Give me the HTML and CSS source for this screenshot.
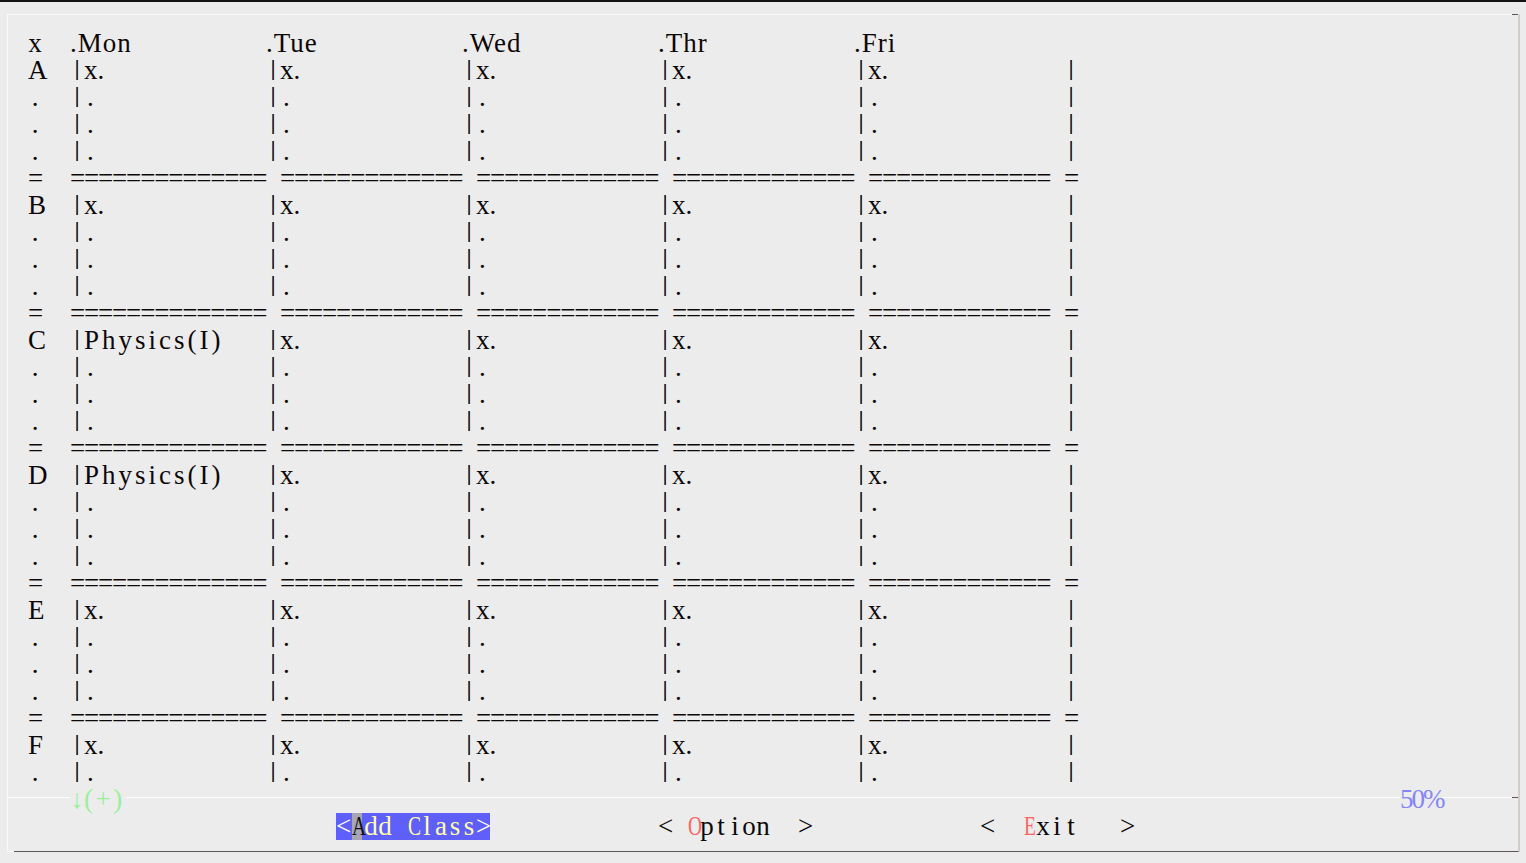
FILE: index.html
```html
<!DOCTYPE html>
<html>
<head>
<meta charset="utf-8">
<title>Timetable</title>
<link rel="stylesheet" href="styles.css">
</head>
<body>
<div class="topline"></div>
<div class="frame">
  <div class="table">
    <div class="row hd"><span class="lbl">x</span><span class="c">.Mon</span><span class="c">.Tue</span><span class="c">.Wed</span><span class="c">.Thr</span><span class="c">.Fri</span></div>

    <div class="row"><span class="lbl">A</span><span class="c"><span class="v">|</span>x.</span><span class="c"><span class="v">|</span>x.</span><span class="c"><span class="v">|</span>x.</span><span class="c"><span class="v">|</span>x.</span><span class="c"><span class="v">|</span>x.</span><span class="end"><span class="v">|</span></span></div>
    <div class="row"><span class="lbl">.</span><span class="c"><span class="v">|</span><span class="d">.</span></span><span class="c"><span class="v">|</span><span class="d">.</span></span><span class="c"><span class="v">|</span><span class="d">.</span></span><span class="c"><span class="v">|</span><span class="d">.</span></span><span class="c"><span class="v">|</span><span class="d">.</span></span><span class="end"><span class="v">|</span></span></div>
    <div class="row"><span class="lbl">.</span><span class="c"><span class="v">|</span><span class="d">.</span></span><span class="c"><span class="v">|</span><span class="d">.</span></span><span class="c"><span class="v">|</span><span class="d">.</span></span><span class="c"><span class="v">|</span><span class="d">.</span></span><span class="c"><span class="v">|</span><span class="d">.</span></span><span class="end"><span class="v">|</span></span></div>
    <div class="row"><span class="lbl">.</span><span class="c"><span class="v">|</span><span class="d">.</span></span><span class="c"><span class="v">|</span><span class="d">.</span></span><span class="c"><span class="v">|</span><span class="d">.</span></span><span class="c"><span class="v">|</span><span class="d">.</span></span><span class="c"><span class="v">|</span><span class="d">.</span></span><span class="end"><span class="v">|</span></span></div>
    <div class="row sp"><span class="lbl">=</span><span class="c">==============</span><span class="c q">=============</span><span class="c q">=============</span><span class="c q">=============</span><span class="c q">=============</span><span class="end">=</span></div>

    <div class="row"><span class="lbl">B</span><span class="c"><span class="v">|</span>x.</span><span class="c"><span class="v">|</span>x.</span><span class="c"><span class="v">|</span>x.</span><span class="c"><span class="v">|</span>x.</span><span class="c"><span class="v">|</span>x.</span><span class="end"><span class="v">|</span></span></div>
    <div class="row"><span class="lbl">.</span><span class="c"><span class="v">|</span><span class="d">.</span></span><span class="c"><span class="v">|</span><span class="d">.</span></span><span class="c"><span class="v">|</span><span class="d">.</span></span><span class="c"><span class="v">|</span><span class="d">.</span></span><span class="c"><span class="v">|</span><span class="d">.</span></span><span class="end"><span class="v">|</span></span></div>
    <div class="row"><span class="lbl">.</span><span class="c"><span class="v">|</span><span class="d">.</span></span><span class="c"><span class="v">|</span><span class="d">.</span></span><span class="c"><span class="v">|</span><span class="d">.</span></span><span class="c"><span class="v">|</span><span class="d">.</span></span><span class="c"><span class="v">|</span><span class="d">.</span></span><span class="end"><span class="v">|</span></span></div>
    <div class="row"><span class="lbl">.</span><span class="c"><span class="v">|</span><span class="d">.</span></span><span class="c"><span class="v">|</span><span class="d">.</span></span><span class="c"><span class="v">|</span><span class="d">.</span></span><span class="c"><span class="v">|</span><span class="d">.</span></span><span class="c"><span class="v">|</span><span class="d">.</span></span><span class="end"><span class="v">|</span></span></div>
    <div class="row sp"><span class="lbl">=</span><span class="c">==============</span><span class="c q">=============</span><span class="c q">=============</span><span class="c q">=============</span><span class="c q">=============</span><span class="end">=</span></div>

    <div class="row"><span class="lbl">C</span><span class="c"><span class="v">|</span><span class="ph">Physics(I)</span></span><span class="c"><span class="v">|</span>x.</span><span class="c"><span class="v">|</span>x.</span><span class="c"><span class="v">|</span>x.</span><span class="c"><span class="v">|</span>x.</span><span class="end"><span class="v">|</span></span></div>
    <div class="row"><span class="lbl">.</span><span class="c"><span class="v">|</span><span class="d">.</span></span><span class="c"><span class="v">|</span><span class="d">.</span></span><span class="c"><span class="v">|</span><span class="d">.</span></span><span class="c"><span class="v">|</span><span class="d">.</span></span><span class="c"><span class="v">|</span><span class="d">.</span></span><span class="end"><span class="v">|</span></span></div>
    <div class="row"><span class="lbl">.</span><span class="c"><span class="v">|</span><span class="d">.</span></span><span class="c"><span class="v">|</span><span class="d">.</span></span><span class="c"><span class="v">|</span><span class="d">.</span></span><span class="c"><span class="v">|</span><span class="d">.</span></span><span class="c"><span class="v">|</span><span class="d">.</span></span><span class="end"><span class="v">|</span></span></div>
    <div class="row"><span class="lbl">.</span><span class="c"><span class="v">|</span><span class="d">.</span></span><span class="c"><span class="v">|</span><span class="d">.</span></span><span class="c"><span class="v">|</span><span class="d">.</span></span><span class="c"><span class="v">|</span><span class="d">.</span></span><span class="c"><span class="v">|</span><span class="d">.</span></span><span class="end"><span class="v">|</span></span></div>
    <div class="row sp"><span class="lbl">=</span><span class="c">==============</span><span class="c q">=============</span><span class="c q">=============</span><span class="c q">=============</span><span class="c q">=============</span><span class="end">=</span></div>

    <div class="row"><span class="lbl">D</span><span class="c"><span class="v">|</span><span class="ph">Physics(I)</span></span><span class="c"><span class="v">|</span>x.</span><span class="c"><span class="v">|</span>x.</span><span class="c"><span class="v">|</span>x.</span><span class="c"><span class="v">|</span>x.</span><span class="end"><span class="v">|</span></span></div>
    <div class="row"><span class="lbl">.</span><span class="c"><span class="v">|</span><span class="d">.</span></span><span class="c"><span class="v">|</span><span class="d">.</span></span><span class="c"><span class="v">|</span><span class="d">.</span></span><span class="c"><span class="v">|</span><span class="d">.</span></span><span class="c"><span class="v">|</span><span class="d">.</span></span><span class="end"><span class="v">|</span></span></div>
    <div class="row"><span class="lbl">.</span><span class="c"><span class="v">|</span><span class="d">.</span></span><span class="c"><span class="v">|</span><span class="d">.</span></span><span class="c"><span class="v">|</span><span class="d">.</span></span><span class="c"><span class="v">|</span><span class="d">.</span></span><span class="c"><span class="v">|</span><span class="d">.</span></span><span class="end"><span class="v">|</span></span></div>
    <div class="row"><span class="lbl">.</span><span class="c"><span class="v">|</span><span class="d">.</span></span><span class="c"><span class="v">|</span><span class="d">.</span></span><span class="c"><span class="v">|</span><span class="d">.</span></span><span class="c"><span class="v">|</span><span class="d">.</span></span><span class="c"><span class="v">|</span><span class="d">.</span></span><span class="end"><span class="v">|</span></span></div>
    <div class="row sp"><span class="lbl">=</span><span class="c">==============</span><span class="c q">=============</span><span class="c q">=============</span><span class="c q">=============</span><span class="c q">=============</span><span class="end">=</span></div>

    <div class="row"><span class="lbl">E</span><span class="c"><span class="v">|</span>x.</span><span class="c"><span class="v">|</span>x.</span><span class="c"><span class="v">|</span>x.</span><span class="c"><span class="v">|</span>x.</span><span class="c"><span class="v">|</span>x.</span><span class="end"><span class="v">|</span></span></div>
    <div class="row"><span class="lbl">.</span><span class="c"><span class="v">|</span><span class="d">.</span></span><span class="c"><span class="v">|</span><span class="d">.</span></span><span class="c"><span class="v">|</span><span class="d">.</span></span><span class="c"><span class="v">|</span><span class="d">.</span></span><span class="c"><span class="v">|</span><span class="d">.</span></span><span class="end"><span class="v">|</span></span></div>
    <div class="row"><span class="lbl">.</span><span class="c"><span class="v">|</span><span class="d">.</span></span><span class="c"><span class="v">|</span><span class="d">.</span></span><span class="c"><span class="v">|</span><span class="d">.</span></span><span class="c"><span class="v">|</span><span class="d">.</span></span><span class="c"><span class="v">|</span><span class="d">.</span></span><span class="end"><span class="v">|</span></span></div>
    <div class="row"><span class="lbl">.</span><span class="c"><span class="v">|</span><span class="d">.</span></span><span class="c"><span class="v">|</span><span class="d">.</span></span><span class="c"><span class="v">|</span><span class="d">.</span></span><span class="c"><span class="v">|</span><span class="d">.</span></span><span class="c"><span class="v">|</span><span class="d">.</span></span><span class="end"><span class="v">|</span></span></div>
    <div class="row sp"><span class="lbl">=</span><span class="c">==============</span><span class="c q">=============</span><span class="c q">=============</span><span class="c q">=============</span><span class="c q">=============</span><span class="end">=</span></div>

    <div class="row"><span class="lbl">F</span><span class="c"><span class="v">|</span>x.</span><span class="c"><span class="v">|</span>x.</span><span class="c"><span class="v">|</span>x.</span><span class="c"><span class="v">|</span>x.</span><span class="c"><span class="v">|</span>x.</span><span class="end"><span class="v">|</span></span></div>
    <div class="row"><span class="lbl">.</span><span class="c"><span class="v">|</span><span class="d">.</span></span><span class="c"><span class="v">|</span><span class="d">.</span></span><span class="c"><span class="v">|</span><span class="d">.</span></span><span class="c"><span class="v">|</span><span class="d">.</span></span><span class="c"><span class="v">|</span><span class="d">.</span></span><span class="end"><span class="v">|</span></span></div>
  </div>

  <div class="sep">
    <div class="ln l1"></div>
    <div class="plus"><span class="arr">↓</span><span class="pl">(+)</span></div>
    <div class="ln grow"></div>
    <div class="pct">50%</div>
    <div class="ln l3"></div>
    <div class="ln dark"></div>
  </div>

  <div class="btns">
    <div class="btn sel"><span class="k w">&lt;</span><span class="k cur n">A</span><span class="k y">d</span><span class="k y">d</span><span class="k"> </span><span class="k y n">C</span><span class="k y">l</span><span class="k y">a</span><span class="k y">s</span><span class="k y">s</span><span class="k w">&gt;</span></div>
    <div class="btn"><span class="k">&lt;</span><span class="k"> </span><span class="k r n">O</span><span class="k">p</span><span class="k">t</span><span class="k">i</span><span class="k">o</span><span class="k">n</span><span class="k"> </span><span class="k"> </span><span class="k">&gt;</span></div>
    <div class="btn"><span class="k">&lt;</span><span class="k"> </span><span class="k"> </span><span class="k r n">E</span><span class="k">x</span><span class="k">i</span><span class="k">t</span><span class="k"> </span><span class="k"> </span><span class="k"> </span><span class="k">&gt;</span></div>
  </div>
</div>
</body>
</html>
```

FILE: styles.css
```css
html, body {
  margin: 0;
  padding: 0;
}
body {
  width: 1526px;
  height: 863px;
  overflow: hidden;
  background: #ececec;
  font-family: "Liberation Serif", "Times New Roman", serif;
  font-size: 27px;
  color: #0c0808;
}
.topline {
  height: 2px;
  background: #141414;
}
.frame {
  position: relative;
  box-sizing: border-box;
  margin: 12px 0 0 7px;
  width: 1512px;
  height: 838px;
  border-top: 1px solid #fafafa;
  border-left: 1px solid #fafafa;
  border-bottom: 1px solid #5c5656;
  border-right: 1px solid #eec8a0;
  box-shadow: 1px 0 0 #b6d2ee;
}
.frame::before {
  content: "";
  position: absolute;
  top: -1px;
  right: 0;
  width: 6px;
  height: 1px;
  background: #5c5656;
}
.frame::after {
  content: "";
  position: absolute;
  bottom: -1px;
  left: -1px;
  width: 7px;
  height: 1px;
  background: #fafafa;
}
.table {
  padding: 15px 0 0 20px;
}
.row {
  display: grid;
  grid-template-columns: 42px repeat(5, 196px) 28px;
  height: 27px;
  line-height: 27px;
  white-space: pre;
}
.lbl {
  width: 14px;
  text-align: center;
}
.hd .c {
  letter-spacing: 1px;
}
.v {
  display: inline-block;
  vertical-align: top;
  width: 14px;
  height: 27px;
  text-align: center;
  font-size: 21px;
  font-weight: 700;
  line-height: 23px;
  color: #000;
}
.d {
  padding-left: 3px;
}
.ph {
  letter-spacing: 3px;
}
.end {
  padding-left: 14px;
  width: 14px;
  text-align: center;
}
.sp .c {
  letter-spacing: -1.2px;
}
.sp .q {
  padding-left: 14px;
}
.sep {
  display: flex;
  align-items: flex-start;
  height: 27px;
  line-height: 27px;
}
.ln {
  height: 1px;
  margin-top: 11px;
  background: #fdfdfd;
}
.l1 {
  width: 62px;
}
.grow {
  flex: 1;
}
.l3 {
  width: 70px;
}
.ln.dark {
  width: 6px;
  background: #5c5656;
}
.plus {
  display: flex;
  width: 56px;
  color: #98f098;
}
.arr {
  width: 14px;
  text-align: center;
}
.pl {
  letter-spacing: 2.5px;
}
.pct {
  width: 42px;
  color: #8484ff;
  letter-spacing: -2px;
}
.btns {
  display: flex;
  gap: 168px;
  padding-left: 328px;
  height: 27px;
  line-height: 27px;
}
.btn {
  display: flex;
  width: 154px;
}
.k {
  width: 14px;
  text-align: center;
  white-space: pre;
}
.k.n {
  transform: scaleX(0.72);
}
.sel {
  background: #5f5ffc;
}
.k.w {
  color: #ffffff;
}
.k.y {
  color: #ffffa8;
}
.k.cur {
  background: #a6a6b4;
  color: #101010;
}
.k.r {
  color: #ff6464;
}
```
